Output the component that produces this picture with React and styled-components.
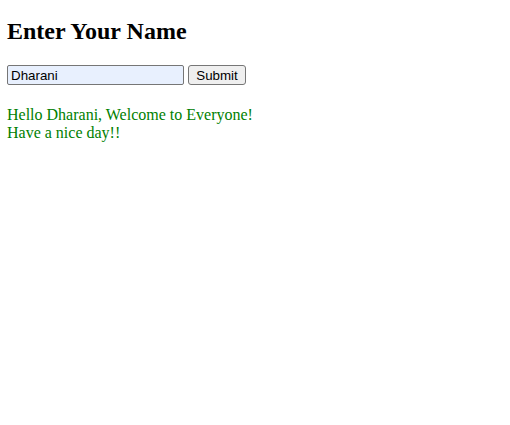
import styled, { createGlobalStyle } from "styled-components";

const GlobalStyle = createGlobalStyle`
  body {
    margin: 0 7px;
    background: #fff;
    font-family: "Liberation Serif", "Times New Roman", serif;
    font-size: 16px;
  }
`;

const Title = styled.h2`
  font-size: 24px;
  font-weight: bold;
  margin: 0;
  padding: 18px 0 20px;
  color: #000;
`;

const NameForm = styled.form`
  display: flex;
  align-items: center;
  gap: 4px;
  margin: 0;
`;

const NameInput = styled.input`
  width: 177px;
  height: 20px;
  box-sizing: border-box;
  padding: 1px 3px;
  border: 1px solid #767676;
  border-radius: 2px;
  background: #e8f0fe;
  font-family: "Liberation Sans", Arial, sans-serif;
  font-size: 13.33px;
  color: #000;
  margin: 0;
`;

const SubmitButton = styled.button`
  width: 58px;
  height: 20px;
  box-sizing: border-box;
  padding: 1px 6px;
  border: 1px solid #767676;
  border-radius: 3px;
  background: #efefef;
  font-family: "Liberation Sans", Arial, sans-serif;
  font-size: 13.33px;
  color: #000;
  margin: 0;
`;

const Greeting = styled.p`
  color: green;
  margin: 21px 0 0;
  line-height: 18px;
`;

export default function App() {
  return (
    <>
      <GlobalStyle />
      <Title>Enter Your Name</Title>
      <NameForm onSubmit={(e) => e.preventDefault()}>
        <NameInput type="text" defaultValue="Dharani" />
        <SubmitButton type="submit">Submit</SubmitButton>
      </NameForm>
      <Greeting>
        Hello Dharani, Welcome to Everyone!
        <br />
        Have a nice day!!
      </Greeting>
    </>
  );
}
